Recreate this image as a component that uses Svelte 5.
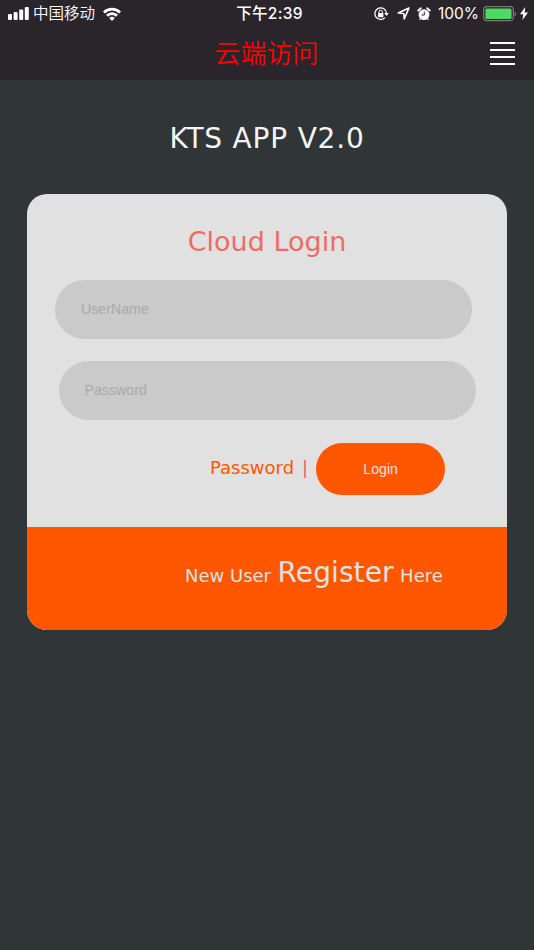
<script lang="ts">
	const signalBars = [6, 8, 10.5, 13];

	let username = $state('');
	let password = $state('');
</script>

<div class="page">
	<header>
		<div class="status">
			<div class="carrier">
				<svg class="signal" width="21" height="13" viewBox="0 0 21 13" fill="#fff">
					{#each signalBars as height, i (height)}
						<rect x={i * 5.6} y={13 - height} width="4" {height} rx="1" />
					{/each}
				</svg>
				<span class="operator">中国移动</span>
				<svg class="wifi" width="18" height="14" viewBox="0 0 18 14" fill="none" stroke="#fff" stroke-width="2.8">
					<path d="M1 5.4a11.3 11.3 0 0 1 16 0" />
					<path d="M4 8.8a7 7 0 0 1 10 0" />
					<path d="M9 14 6.2 11.1a4 4 0 0 1 5.6 0z" fill="#fff" stroke="none" />
				</svg>
			</div>
			<span class="time">下午2:39</span>
			<div class="indicators">
				<svg class="lock" width="15" height="14" viewBox="0 0 15 14" fill="none" stroke="#fff" stroke-width="1.3">
					<path d="M11 10.6A5.8 5.8 0 1 1 12.5 6.2" />
					<path d="M10.2 5.9h4.6l-2.3 3z" fill="#fff" stroke="none" />
					<rect x="4" y="6.1" width="5.4" height="4.2" rx=".5" fill="#fff" stroke="none" />
					<path d="M5 6.3V4.9a1.7 1.7 0 0 1 3.4 0v1.4" stroke-width="1" />
				</svg>
				<svg class="location" width="13" height="13" viewBox="0 0 13 13" fill="none" stroke="#fff" stroke-width="1.6" stroke-linejoin="round">
					<path d="M11.9 1.1 1.2 5.9l5.6.6.4 5.5z" />
				</svg>
				<svg class="alarm" width="14" height="14" viewBox="0 0 14 14">
					<circle cx="7" cy="7.6" r="5.4" fill="#fff" />
					<path d="M1.3 3.5 3.8 1.3M12.7 3.5l-2.5-2.2" stroke="#fff" stroke-width="1.9" stroke-linecap="round" />
					<path d="m3.5 11.5-1 1.5M10.5 11.5l1 1.5" stroke="#fff" stroke-width="1.2" />
					<path d="M7.3 4.6v3.4H4.4" fill="none" stroke="#2a252b" stroke-width="1" />
				</svg>
				<span class="percent">100%</span>
				<svg class="battery" width="34" height="16" viewBox="0 0 34 16">
					<rect x=".7" y=".7" width="29.6" height="14" rx="3.2" fill="none" stroke="#7d797e" stroke-width="1.2" />
					<rect x="2.4" y="2.4" width="26.2" height="10.6" rx="1.6" fill="#4cd964" />
					<path d="M31.6 5.4c2 1 2 3.8 0 4.8z" fill="#7d797e" />
				</svg>
				<svg class="bolt" width="8" height="13" viewBox="0 0 8 13" fill="#fff">
					<path d="M5.2 0 0 7.2h3.2L2.5 13 8 5.4H4.7z" />
				</svg>
			</div>
		</div>
		<div class="navbar">
			<h1>云端访问</h1>
			<button class="menu" type="button" aria-label="Menu">
				<span></span><span></span><span></span><span></span>
			</button>
		</div>
	</header>

	<main>
		<h2>KTS APP V2.0</h2>
		<form class="card">
			<div class="fields">
				<h3>Cloud Login</h3>
				<input type="text" placeholder="UserName" bind:value={username} />
				<input class="password" type="password" placeholder="Password" bind:value={password} />
				<div class="actions">
					<a href="#password">Password</a>
					<span class="divider">|</span>
					<button class="login" type="button">Login</button>
				</div>
			</div>
			<footer>
				<span>New User</span>
				<a class="register" href="#register">Register</a>
				<span>Here</span>
			</footer>
		</form>
	</main>
</div>

<style>
	:global(body) {
		background: #303538;
	}

	.page {
		--orange: #ff5700;

		height: 950px;
		overflow: hidden;
		background: #303538;
		font-family: 'DejaVu Sans', sans-serif;
	}

	h1,
	h2,
	h3 {
		margin: 0;
		font-weight: 400;
		white-space: nowrap;
	}

	a {
		color: inherit;
		text-decoration: none;
	}

	svg {
		display: block;
		flex: none;
	}

	header {
		height: 80px;
		background: #2a252b;
	}

	.status {
		display: grid;
		grid-template-columns: 1fr auto 1fr;
		height: 27px;
		padding: 0 6px 0 8px;
		color: #fff;
		font-family: Inter, 'Noto Sans CJK SC', sans-serif;
		font-size: 15.5px;
		line-height: 28px;
		white-space: nowrap;
	}

	.carrier,
	.indicators {
		display: flex;
		align-items: center;
		height: 27px;
	}

	.operator {
		margin-left: 4px;
		font-weight: 350;
	}

	.wifi {
		margin-left: 8px;
	}

	.time {
		padding-left: 3px;
		font-weight: 500;
		letter-spacing: 0.3px;
	}

	.indicators {
		justify-content: flex-end;
	}

	.location {
		margin-left: 8px;
	}

	.alarm {
		margin-left: 7px;
	}

	.percent {
		margin-left: 7px;
	}

	.battery {
		margin-left: 4px;
	}

	.bolt {
		margin-left: 3px;
	}

	.navbar {
		display: grid;
		grid-template-columns: 1fr auto 1fr;
		align-items: start;
		height: 53px;
		padding-right: 19px;
		padding-left: 19px;
	}

	h1 {
		grid-column: 2;
		color: #f00;
		font-family: 'Noto Sans CJK SC', sans-serif;
		font-size: 26px;
		font-weight: 350;
		line-height: 50px;
		margin-left: -1px;
	}

	.menu {
		display: flex;
		flex-direction: column;
		justify-self: end;
		gap: 5px;
		margin-top: 14.5px;
		padding: 0;
		border: 0;
		background: none;
	}

	.menu span {
		width: 25px;
		height: 2px;
		background: #fff;
	}

	h2 {
		height: 114px;
		color: #f5f5f5;
		font-size: 28px;
		letter-spacing: 0.8px;
		line-height: 118px;
		text-align: center;
	}

	.card {
		width: 480px;
		height: 436px;
		margin: 0 auto;
		overflow: hidden;
		border-radius: 20px;
		background: #e1e1e1;
	}

	.fields {
		height: 333px;
		box-sizing: border-box;
		padding-left: 28px;
	}

	h3 {
		height: 86px;
		margin-left: -28px;
		color: #ec6d66;
		font-size: 27px;
		line-height: 95px;
		text-align: center;
	}

	input {
		display: block;
		box-sizing: border-box;
		width: 417px;
		height: 59px;
		margin: 0 0 22px;
		padding: 0 26px 2px;
		border: 0;
		border-radius: 30px;
		background: #cacaca;
		font-family: 'Liberation Sans', sans-serif;
		font-size: 14.2px;
	}

	input::placeholder {
		color: #a9a9a9;
	}

	.password {
		margin-left: 3.5px;
	}

	.actions {
		display: flex;
		height: 52px;
		padding-left: 155px;
		color: var(--orange);
		font-size: 18px;
		line-height: 51px;
	}

	.divider {
		margin-left: 8px;
		color: #e8665c;
	}

	.login {
		width: 129px;
		height: 52px;
		margin-top: 0.5px;
		margin-left: 8px;
		padding: 0;
		border: 0;
		border-radius: 26px;
		background: var(--orange);
		color: #e1e1e1;
		font-family: 'Liberation Sans', sans-serif;
		font-size: 14.2px;
	}

	footer {
		display: flex;
		align-items: baseline;
		gap: 6.5px;
		height: 103px;
		padding-left: 158px;
		background: var(--orange);
		color: #e1e1e1;
		font-size: 18px;
		line-height: 92px;
		white-space: nowrap;
	}

	.register {
		font-size: 28px;
		letter-spacing: 0.1px;
	}
</style>
